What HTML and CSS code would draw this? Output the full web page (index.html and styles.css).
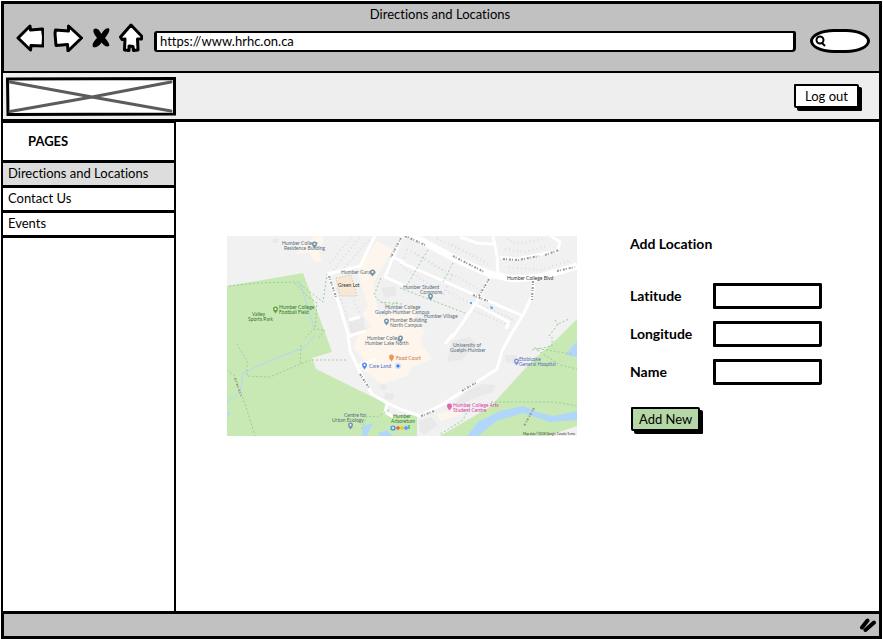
FILE: index.html
```html
<!DOCTYPE html>
<html lang="en">
<head>
<meta charset="utf-8">
<title>Directions and Locations</title>
<link rel="stylesheet" href="styles.css">
</head>
<body>
<div class="window">
  <header class="chrome">
    <div class="chrome-title">Directions and Locations</div>
    <div class="chrome-bar">
      <div class="nav-icons">
        <button type="button" class="icon-btn" aria-label="Back"><svg width="28" height="28" viewBox="0 0 28 28"><path class="ico" d="M2 14 14 2l.5 4L26.500 5l1 8-.5 9-12-.5L14.500 26Z"/></svg></button>
        <button type="button" class="icon-btn" aria-label="Forward"><svg width="30" height="28" viewBox="0 0 30 28"><path class="ico" d="M28.500 14 15.500 2v5L2.500 6 2 9.500l1 12 11.500-1 .5 6.500Z"/></svg></button>
        <button type="button" class="icon-btn" aria-label="Stop"><svg width="18" height="22" viewBox="0 0 18 22"><path d="M2 2C5 0 8 4 9.500 7 11 4 14 0 17 1.500 18.500 4 15 8 13 11c2 2 4 5 4.500 7.500-2 2.500-6 0-8-3C8 18 4 21.500 1 20c-1.500-2.500 1-6 4-9C3 8 0 4.500 2 2Z"/></svg></button>
        <button type="button" class="icon-btn" aria-label="Home"><svg width="24" height="30" viewBox="0 0 24 30"><path class="ico" d="M12 2 1.500 14l1.500 2.500 3-.5-.5 11 4.500.5V23l4 .5.5 4 4.500-.5-.5-11 4 0 .5-2.500Z"/></svg></button>
      </div>
      <input class="address" type="text" aria-label="Address" value="https://www.hrhc.on.ca">
      <label class="search">
        <svg width="12" height="12" viewBox="0 0 12 12"><circle cx="5" cy="5" r="3.500"/><path d="M7 8l3 3"/></svg>
        <input type="search" aria-label="Search">
      </label>
    </div>
  </header>
  <div class="banner">
    <svg class="logo" width="170" height="39" viewBox="0 0 170 39" role="img" aria-label="Logo">
      <path class="logo-box" d="M1.500 2 168.500 1.500V37L2 37.500Z"/>
      <path class="logo-cross" d="M4 5 86 20 165 34M4 34.500 86 20 165 5"/>
    </svg>
    <button type="button" class="btn">Log out</button>
  </div>
  <div class="content">
    <nav class="sidebar">
      <h2>PAGES</h2>
      <a class="current" href="#directions">Directions and Locations</a>
      <a href="#contact">Contact Us</a>
      <a href="#events">Events</a>
    </nav>
    <main>
      <svg class="map" viewBox="0 0 350 200" role="img" aria-label="Campus map">
        <rect width="350" height="200" fill="#f1f1f1"/>
        <g fill="#c9e9b4">
          <path d="M0 50 76 37 100 102 105 116 85 122 89 133 158 167 163 180 190 179V200H0Z"/>
          <path d="M350 83 331 102 306 124 263 171 213 200H350Z"/>
        </g>
        <path fill="#f1f1f1" d="M350 190 326 198 322 200H350Z"/>
        <g fill="#fef5ec">
          <path d="M150 5 166 13 146 48 150 70 153 81 175 75 183 68 190 70 188 85 198 95 193 105 205 123 186 130 180 140 155 148 130 130 138 124 126 112 131 100 145 91 135 78 141 71 130 35Z"/>
          <path d="M75 10 70 18 82 17 88 26 95 25 91 13 97 5 96 0H88Z"/>
          <path d="M210 178 228 173 236 178 213 185Z"/>
        </g>
        <path fill="#e9e9e9" d="M154 52l14-2 2 9-12 3ZM122 84l14-3 3 15-15 3ZM152 150l4-2 4 2-3 5ZM158 156l9 2-1 6-9-1ZM225 105l18-4 6 6-14 17-15 2ZM278 119l12 0-3 9-8-2ZM46 3h5v4h-5ZM240 155l16-7 13 1-4 8-10 2-22 10-4-3ZM192 185l12-4 7 8-14 10-5-5Z"/>
        <path class="lots" d="M132 2 105 36M124 2 102 28M142 4 116 33M110 52 126 98M118 42l14 35M180 13l45 27-8 18-43-28ZM188 17l30 18M225 38l28 16-6 15-28-14ZM244 73l38 17 3-7-36-16M280 3 290 8 315 3M278 13l20 3 22-6M282 31l30 3 30-9M225 8l35 20M210 3l48 22"/>
        <path fill="#f7e8d6" stroke="#cdb9a3" stroke-dasharray="1 2" d="M109 42 124 39 130 60 113 60Z"/>
        <g fill="#b0d7fa">
          <path d="M350 105 338 119 350 121Z"/>
          <path d="M240 200 251 186 273 175 296 170 310 176 326 180 350 175V184L323 186 296 177 270 185 251 200Z"/>
          <path d="M135 200 136 190 146 187 143 193 140 200ZM151 197 160 194 166 200H153ZM0 175l3 2-2 6ZM178 188l5 4-3 3Z"/>
        </g>
        <path fill="none" stroke="#b0d7fa" d="M72 44 88 95M88 99 78 111 35 128 16 137 13 156 0 166"/>
        <g class="roads">
          <path class="main-road" d="M184-1 206 11 233 25 263 38 286 43 313 41 350 30"/>
          <path d="M148 0 133 30 101 38 113 71 121 98 123 115 133 136 145 158 160 167 173 173 193 180 216 168 270 133 275 115 283 100 296 79 306 58 306 43"/>
          <path d="M173 26 246 58 296 80M263 41 250 65 236 86 225 102M266 0 270 20 271 38M233 1 250 7 266 8M273 21 290 23 330 15 333 6 323-1M175 0 166 21 158 41 178 50M166 21 178 27M122 84 133 81M122 100 139 95M132 130 149 123M218 108 226 98M160 168 158 176 166 181M246 67 282 86 279 93"/>
        </g>
        <path class="road-marks" d="M102 40 109 61M133 138 142 152M174 2 164 21M178 0 198 9M226 20 257 36M246 59 261 65M262 43 252 60M306 45 305 64M276 23 291 24 312 20M318 19 332 14M330 35 348 31M194 180 207 175M235 155 250 146M8 142 14 160M307 172 297 190"/>
        <path class="paths" d="M2 50 30 47 70 46 96 66 100 38M68 47 80 60 90 67 88 92M78 102l9-9 11 1-6 8M10 108 20 125 20 140 43 141 83 124M74 109l-1 20M85 124h35M0 134l8 6 12 34 8 26M154 42 147 59 153 66 175 68M154 66 162 70 170 66M173 52l65 25M201 14 180 49M226 27 216 46M322 100 331 88 342 83M328 84l3 5M307 112 345 118M305 114l20-4 0-9M310 114l23 15 17 4M264 166l64 0 22 4M243 170 236 184 212 199M162 174 150 181 140 180 134 195"/>
        <g class="labels">
          <text x="55" y="9">Humber College</text><text x="57" y="14">Residence Building</text>
          <text x="114" y="38">Humber Garage</text>
          <text class="dark" x="111" y="51">Green Lot</text>
          <text x="176" y="53">Humber Student</text><text x="193" y="58">Commons</text>
          <text x="197" y="82">Humber Village</text>
          <text x="158" y="73">Humber College</text><text x="148" y="78">Guelph-Humber Campus</text>
          <text x="163" y="86">Humber Building</text><text x="163" y="91">North Campus</text>
          <text x="140" y="104">Humber College</text><text x="138" y="109">Humber Lake North</text>
          <text x="226" y="111">University of</text><text x="223" y="116">Guelph-Humber</text>
          <text x="117" y="181">Centre for</text><text x="105" y="186">Urban Ecology</text>
          <text class="green" x="25" y="80">Valley</text><text class="green" x="21" y="85">Sports Park</text>
          <text class="green" x="52" y="73">Humber College</text><text class="green" x="52" y="78">Football Field</text>
          <text class="green" x="166" y="182">Humber</text><text class="green" x="164" y="187">Arboretum</text>
          <text class="orange" x="169" y="124">Food Court</text>
          <text class="blue" x="142" y="132">Care Land</text>
          <text class="indigo" x="292" y="125">Etobicoke</text><text class="indigo" x="292" y="130">General Hospital</text>
          <text class="pink" x="226" y="171">Humber College Arts</text><text class="pink" x="226" y="176">Student Centre</text>
          <text class="dark" x="280" y="44">Humber College Blvd</text>
          <text class="dark credit" x="348" y="199">Map data ©2018 Google Canada Terms</text>
        </g>
        <g class="pins">
          <path id="pin" d="M85 8a2.500 2.500 0 1 1 5 0q0 2-2.500 4.500Q85 10 85 8Z"/>
          <use href="#pin" x="58" y="28"/><use href="#pin" x="116" y="52"/><use href="#pin" x="72" y="77"/><use href="#pin" x="86" y="94"/><use href="#pin" x="36" y="181"/>
          <use href="#pin" x="-39" y="65" fill="#5ba43c"/><use href="#pin" x="77" y="113" fill="#f0955c"/><use href="#pin" x="50" y="121" fill="#4e8df1"/><use href="#pin" x="202" y="117" fill="#8094dd"/><use href="#pin" x="135" y="162" fill="#e066b4"/>
        </g>
        <g fill="#fff"><circle cx="87.500" cy="8" r="1"/><circle cx="145.500" cy="36" r="1"/><circle cx="203.500" cy="60" r="1"/><circle cx="159.500" cy="85" r="1"/><circle cx="173.500" cy="102" r="1"/><circle cx="123.500" cy="189" r="1"/><circle cx="48.500" cy="73" r="1"/><circle cx="137.500" cy="129" r="1"/><circle cx="289.500" cy="125" r="1"/></g>
        <circle cx="171" cy="130" r="3" fill="#cfdffb"/><circle cx="171" cy="130" r="1.500" fill="#3b78e7"/>
        <path fill="#49b6f5" d="M243 66h2v2h-2ZM263 70l3 1v2h-2Z"/>
        <g fill="none" stroke-width="1.200"><circle cx="166" cy="192" r="2" stroke="#4285f4"/><circle cx="171" cy="192" r="1.200" stroke="#ea4335"/><circle cx="175" cy="192" r="1.200" stroke="#fbbc05"/><circle cx="179" cy="192" r="1.200" stroke="#4285f4"/><path d="M182 189v4" stroke="#34a853"/></g>
      </svg>
      <form class="location-form">
        <h1>Add Location</h1>
        <div class="fields">
          <label for="latitude">Latitude</label><input id="latitude" type="text">
          <label for="longitude">Longitude</label><input id="longitude" type="text">
          <label for="name">Name</label><input id="name" type="text">
        </div>
        <button type="button" class="btn btn-add">Add New</button>
      </form>
    </main>
  </div>
  <footer><svg width="16" height="14" viewBox="0 0 16 14"><path d="M2 9.500 7.500 2.500M5.500 12 14 4.500"/></svg></footer>
</div>
</body>
</html>
```
FILE: styles.css
```css
* { box-sizing: border-box; }

body {
  margin: 0;
  background: #fff;
  color: #000;
  font: 13px/16px Lato, sans-serif;
  font-variant-ligatures: none;
}

button, input { font: inherit; color: inherit; font-variant-ligatures: none; }

.window {
  display: flex;
  flex-direction: column;
  min-height: 100vh;
  padding: 1px 1px 0;
}

.chrome {
  height: 72px;
  padding-top: 2px;
  background: #c1c1c1;
  border: 3px solid #000;
  border-bottom-width: 2px;
}

.chrome-title { padding-right: 3px; text-align: center; }

.chrome-bar {
  display: flex;
  align-items: center;
  height: 32px;
  padding: 0 9px 0 12px;
}

.nav-icons { display: flex; align-items: center; gap: 9px; width: 138px; }

.icon-btn { display: flex; padding: 0; border: 0; background: none; }

.ico { fill: #fff; stroke: #000; stroke-width: 3; stroke-linejoin: round; }

.address {
  flex: 1;
  min-width: 0;
  height: 21px;
  margin-top: 6px;
  padding: 0 3px;
  background: #fff;
  border: 2px solid #000;
  border-left-width: 3px;
  border-right-width: 3px;
  border-radius: 3px 2px 4px 3px;
}

.search {
  display: flex;
  align-items: center;
  width: 60px;
  height: 24px;
  margin: 6px 0 0 14px;
  padding-left: 2px;
  background: #fff;
  border: 3px solid #000;
  border-radius: 24px / 12px;
}

.search svg { flex: none; fill: none; stroke: #000; stroke-width: 2; }
.search input { width: 100%; min-width: 0; padding: 0; border: 0; background: none; outline: 0; }

.banner {
  display: flex;
  align-items: center;
  justify-content: space-between;
  height: 49px;
  padding: 0 20px 0 3px;
  background: #eee;
  border: solid #000;
  border-width: 0 3px 3px 2px;
}

.logo-box { fill: #fff; stroke: #000; stroke-width: 3; }
.logo-cross { fill: none; stroke: #5c5c5c; stroke-width: 3; stroke-linecap: round; }

.btn {
  height: 24px;
  padding: 0 9px;
  background: #fff;
  border: 2px solid #000;
  border-radius: 1px 2px 1px 2px;
  box-shadow: 3px 3px 0 #000;
}

.content {
  display: flex;
  flex: 1;
  border: solid #000;
  border-width: 0 3px 3px 2px;
}

.sidebar {
  flex: 0 0 173px;
  border-right: 2px solid #000;
}

.sidebar h2 {
  margin: 0;
  padding: 10px 25px 11px;
  border-top: 1px solid #000;
  font-size: 13px;
  line-height: 16px;
}

.sidebar a {
  display: block;
  height: 25px;
  padding: 2px 5px;
  border-top: 3px solid #000;
  color: #000;
  text-decoration: none;
}

.sidebar a:last-child { height: 28px; border-bottom: 3px solid #000; }
.sidebar .current { background: #ddd; }

main {
  display: flex;
  flex: 1;
  align-items: flex-start;
  gap: 53px;
  padding: 114px 51px 24px;
}

.map { flex: 0 1 350px; min-width: 0; }
.lots { fill: none; stroke: #dedede; stroke-width: 2; stroke-dasharray: 1 3; }
.roads { fill: none; stroke: #fff; stroke-width: 3; stroke-linejoin: round; }
.main-road { stroke-width: 7; }
.road-marks { fill: none; stroke: #999; stroke-width: 2; stroke-dasharray: 2 1 1 2; }
.paths { fill: none; stroke: #9bcd9b; stroke-dasharray: 2 2; }
.labels { font-size: 5px; fill: #566b78; }
.labels .dark { fill: #333; }
.labels .green { fill: #34702c; }
.labels .orange { fill: #c9703a; }
.labels .blue { fill: #3d6fc4; }
.labels .indigo { fill: #5a6bb5; }
.labels .pink { fill: #d6409f; }
.labels .credit { font-size: 3px; text-anchor: end; }
.pins { fill: #7393ab; }

.location-form { flex: none; }

.location-form h1 { margin: 0 0 31px; font-size: 14px; line-height: 16px; }

.fields {
  display: grid;
  grid-template-columns: 83px 109px;
  row-gap: 12px;
  align-items: center;
  font-size: 14px;
  font-weight: bold;
}

.fields input {
  width: 100%;
  height: 26px;
  padding: 0 4px;
  background: #fff;
  border: 3px solid #000;
  border-radius: 1px 2px 3px 1px / 1px 1px 2px 1px;
}

.btn-add { display: block; margin: 22px 0 0 1px; padding: 0 6px; background: #b5d6a5; }

footer {
  display: flex;
  align-items: center;
  justify-content: flex-end;
  height: 25px;
  padding-right: 3px;
  background: #c1c1c1;
  border: solid #000;
  border-width: 0 3px 3px;
}

footer svg { fill: none; stroke: #000; stroke-width: 4; stroke-linecap: round; }
```
